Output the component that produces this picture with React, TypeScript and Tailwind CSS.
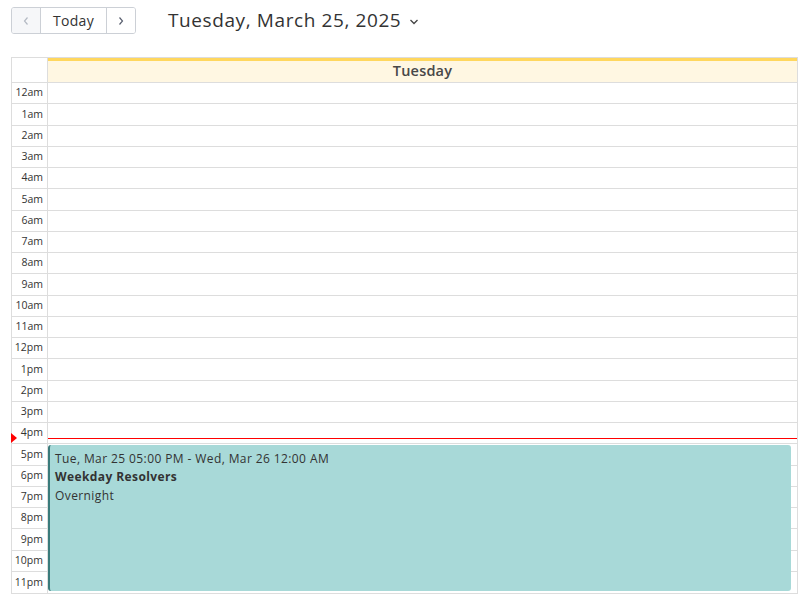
import React from "react";

const hours = [
  "12am","1am","2am","3am","4am","5am","6am","7am","8am","9am","10am","11am",
  "12pm","1pm","2pm","3pm","4pm","5pm","6pm","7pm","8pm","9pm","10pm","11pm",
];

export default function App() {
  return (
    <div className="bg-white min-h-[599px] w-[807px] text-[#333]" style={{ fontFamily: '"Open Sans", sans-serif' }}>
      <div className="flex items-center h-[27px] mt-[7px] ml-[11px]">
        <div className="flex h-[27px] border border-[#ccd0d6] rounded-[3px] overflow-hidden">
          <button className="w-[29px] bg-[#f6f7f9] flex items-center justify-center border-r border-[#ccd0d6]">
            <svg width="8" height="10" viewBox="0 0 8 10"><path d="M5.5 1.5 L2.5 5 L5.5 8.5" fill="none" stroke="#b4bac4" strokeWidth="1.2" /></svg>
          </button>
          <button className="w-[66px] bg-white text-[14px] leading-[20px] tracking-[0.3px] text-[#333] border-r border-[#ccd0d6] flex items-center justify-center">Today</button>
          <button className="w-[28px] bg-white flex items-center justify-center">
            <svg width="8" height="10" viewBox="0 0 8 10"><path d="M2.5 1.5 L5.5 5 L2.5 8.5" fill="none" stroke="#5a6070" strokeWidth="1.2" /></svg>
          </button>
        </div>
        <div className="ml-[32px] flex items-center text-[19px] leading-[27px] text-[#333] tracking-[0.6px]">
          <span>Tuesday, March 25, 2025</span>
          <svg className="ml-[8px] mt-[2px]" width="10" height="8" viewBox="0 0 10 8"><path d="M1.5 2 L5 5.5 L8.5 2" fill="none" stroke="#444" strokeWidth="1.3" /></svg>
        </div>
      </div>

      <div className="mt-[23px] ml-[11px] w-[787px] border border-[#dddddd]">
        <div className="flex h-[25px] border-b border-[#dddddd]">
          <div className="w-[36px] border-r border-[#dddddd] shrink-0" />
          <div className="flex-1 bg-[#fff7e2] border-t-[3px] border-[#ffd75e] flex items-center justify-center pb-[2px] text-[14.5px] font-semibold tracking-[0.2px] text-[#484848]">
            Tuesday
          </div>
        </div>
        <div className="flex relative">
          <div className="w-[36px] border-r border-[#dddddd] shrink-0">
            {hours.map((h, i) => (
              <div key={h} className={`h-[21.25px] flex items-center justify-end pr-[4px] text-[10.5px] text-[#333] ${i < 23 ? "border-b border-[#dddddd]" : ""}`}>
                {h}
              </div>
            ))}
          </div>
          <div className="flex-1 relative">
            {hours.map((h, i) => (
              <div key={h} className={`h-[21.25px] ${i < 23 ? "border-b border-[#dddddd]" : ""}`} />
            ))}
            <div className="absolute left-0 right-0 top-[355px] h-0 border-t border-[#ff0000]" />
            <div className="absolute left-0 right-[6px] top-[362px] h-[146px] bg-[#a8d9d8] rounded-[3px] border-l-[2px] border-[#3a7b7b] pl-[5px] pt-[5px] text-[12px] text-[#333] leading-[18px] tracking-[0.4px]">
              <div>Tue, Mar 25 05:00 PM - Wed, Mar 26 12:00 AM</div>
              <div className="font-bold">Weekday Resolvers</div>
              <div className="mt-[1px]">Overnight</div>
            </div>
          </div>
          <div className="absolute left-[-1px] top-[350px] w-0 h-0 border-y-[5px] border-y-transparent border-l-[6px] border-l-[#ff0000]" />
        </div>
      </div>
    </div>
  );
}
